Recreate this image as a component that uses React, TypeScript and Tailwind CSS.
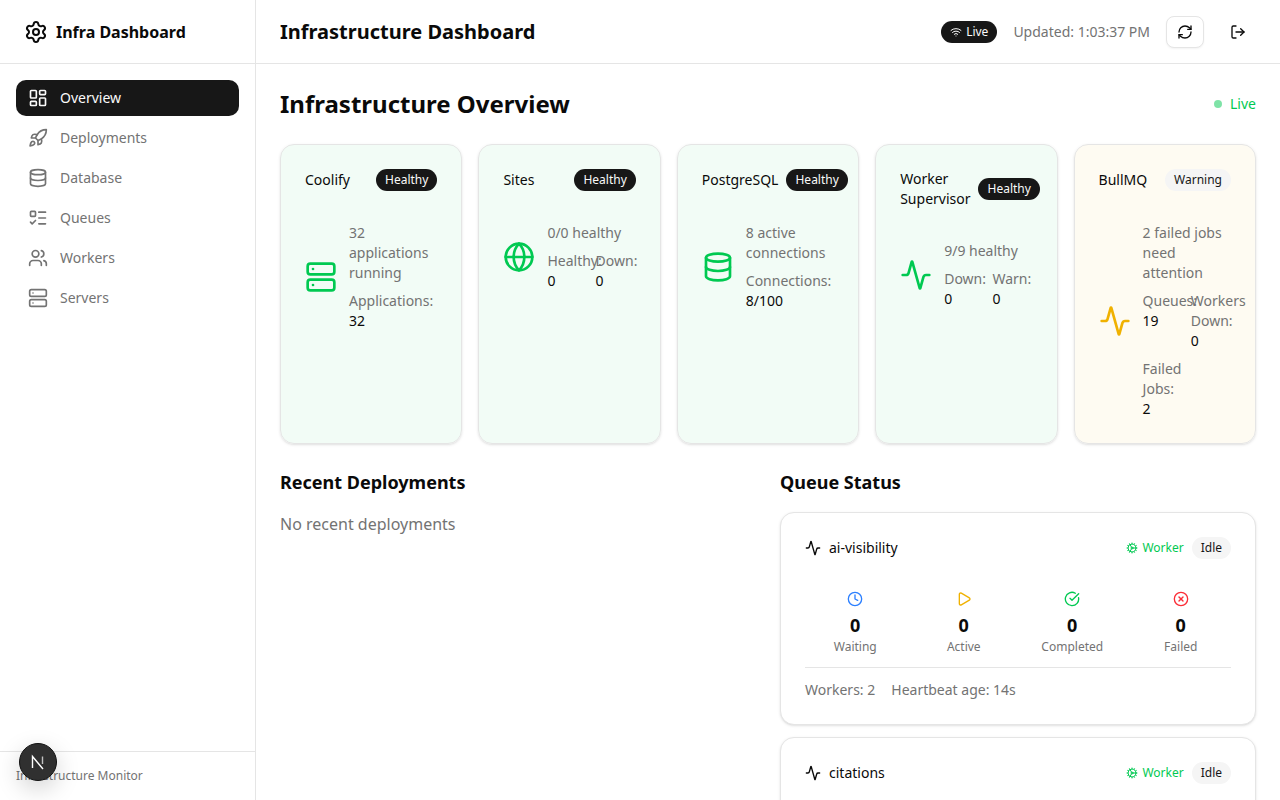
import {
  Activity,
  CircleCheckBig,
  CircleX,
  Clock,
  Cog,
  Database,
  Globe,
  LayoutDashboard,
  ListTodo,
  LogOut,
  Play,
  RefreshCw,
  Rocket,
  Server,
  Settings,
  Users,
  Wifi,
} from 'lucide-react'

const navItems = [
  { label: 'Overview', icon: LayoutDashboard, active: true },
  { label: 'Deployments', icon: Rocket },
  { label: 'Database', icon: Database },
  { label: 'Queues', icon: ListTodo },
  { label: 'Workers', icon: Users },
  { label: 'Servers', icon: Server },
]

const services = [
  {
    name: 'Coolify',
    status: 'Healthy',
    icon: Server,
    text: '32 applications running',
    stats: [{ label: 'Applications:', value: '32' }],
  },
  {
    name: 'Sites',
    status: 'Healthy',
    icon: Globe,
    text: '0/0 healthy',
    stats: [
      { label: 'Healthy:', value: '0' },
      { label: 'Down:', value: '0' },
    ],
  },
  {
    name: 'PostgreSQL',
    status: 'Healthy',
    icon: Database,
    text: '8 active connections',
    stats: [{ label: 'Connections:', value: '8/100' }],
  },
  {
    name: 'Worker Supervisor',
    status: 'Healthy',
    icon: Activity,
    text: '9/9 healthy',
    stats: [
      { label: 'Down:', value: '0' },
      { label: 'Warn:', value: '0' },
    ],
  },
  {
    name: 'BullMQ',
    status: 'Warning',
    icon: Activity,
    text: '2 failed jobs need attention',
    stats: [
      { label: 'Queues:', value: '19' },
      { label: 'Workers Down:', value: '0' },
      { label: 'Failed Jobs:', value: '2' },
    ],
  },
]

const queues = [
  { name: 'ai-visibility', workers: 2, age: '14s' },
  { name: 'citations', workers: 2, age: '14s' },
]

function ServiceCard({ service }: { service: (typeof services)[number] }) {
  const warning = service.status === 'Warning'
  const Icon = service.icon

  return (
    <div className={`rounded-[14px] border border-[#e5e5e5] p-6 shadow-sm ${warning ? 'bg-yellow-500/5' : 'bg-green-500/5'}`}>
      <div className="mb-8 flex items-center justify-between gap-2">
        <div className="text-sm leading-5 text-[#0a0a0a]">{service.name}</div>
        <span
          className={`inline-flex shrink-0 items-center rounded-full border border-transparent px-2 py-0.5 text-xs ${
            warning ? 'bg-[#f5f5f5] text-[#171717]' : 'bg-[#171717] text-[#fafafa]'
          }`}
        >
          {service.status}
        </span>
      </div>
      <div className="flex items-center gap-3">
        <Icon className={`h-8 w-8 shrink-0 ${warning ? 'text-yellow-500' : 'text-green-500'}`} />
        <div className="min-w-0 flex-1 text-sm leading-5">
          <p className="text-[#737373]">{service.text}</p>
          <div className="mt-2 grid grid-cols-2 gap-2">
            {service.stats.map(stat => (
              <div key={stat.label}>
                <div className="text-[#737373]">{stat.label}</div>
                <div className="text-[#0a0a0a]">{stat.value}</div>
              </div>
            ))}
          </div>
        </div>
      </div>
    </div>
  )
}

function QueueStat({ icon: Icon, color, label }: { icon: typeof Clock; color: string; label: string }) {
  return (
    <div className="flex flex-col items-center">
      <Icon className={`mb-1 h-4 w-4 ${color}`} />
      <div className="text-lg font-bold leading-7 text-[#0a0a0a]">0</div>
      <div className="text-xs text-[#737373]">{label}</div>
    </div>
  )
}

function QueueCard({ queue }: { queue: (typeof queues)[number] }) {
  return (
    <div className="rounded-[14px] border border-[#e5e5e5] bg-white p-6 shadow-sm">
      <div className="mb-8 flex items-center justify-between">
        <div className="flex items-center gap-2 text-sm text-[#0a0a0a]">
          <Activity className="h-4 w-4" />
          {queue.name}
        </div>
        <div className="flex items-center gap-2">
          <span className="flex items-center gap-1 text-xs text-green-500">
            <Cog className="h-3 w-3" />
            Worker
          </span>
          <span className="inline-flex items-center rounded-full border border-transparent bg-[#f5f5f5] px-2 py-0.5 text-xs text-[#171717]">
            Idle
          </span>
        </div>
      </div>
      <div className="grid grid-cols-4 gap-2">
        <QueueStat icon={Clock} color="text-blue-500" label="Waiting" />
        <QueueStat icon={Play} color="text-yellow-500" label="Active" />
        <QueueStat icon={CircleCheckBig} color="text-green-500" label="Completed" />
        <QueueStat icon={CircleX} color="text-red-500" label="Failed" />
      </div>
      <div className="mt-3 flex gap-4 border-t border-[#e5e5e5] pt-3 text-sm leading-5 text-[#737373]">
        <span>Workers: {queue.workers}</span>
        <span>Heartbeat age: {queue.age}</span>
      </div>
    </div>
  )
}

export default function App() {
  return (
    <div className="flex h-screen overflow-hidden bg-white font-['Noto_Sans',sans-serif] text-[#0a0a0a]">
      {/* sidebar */}
      <aside className="flex w-64 shrink-0 flex-col border-r border-[#e5e5e5]">
        <div className="flex h-16 items-center gap-2 border-b border-[#e5e5e5] px-6">
          <Settings className="h-6 w-6" />
          <span className="font-bold">Infra Dashboard</span>
        </div>
        <nav className="flex flex-1 flex-col gap-1 p-4">
          {navItems.map(item => (
            <a
              key={item.label}
              className={`flex h-9 items-center gap-3 rounded-[10px] px-3 text-sm ${
                item.active ? 'bg-[#171717] text-[#fafafa]' : 'text-[#737373]'
              }`}
            >
              <item.icon className="h-5 w-5" />
              {item.label}
            </a>
          ))}
        </nav>
        <div className="border-t border-[#e5e5e5] p-4 text-xs text-[#737373]">Infrastructure Monitor</div>
      </aside>

      <div className="flex min-w-0 flex-1 flex-col">
        <header className="flex h-16 shrink-0 items-center justify-between border-b border-[#e5e5e5] px-6">
          <h1 className="text-xl font-bold">Infrastructure Dashboard</h1>
          <div className="flex items-center gap-4">
            <span className="inline-flex items-center gap-1 rounded-full border border-transparent bg-[#171717] px-2 py-0.5 text-xs text-[#fafafa]">
              <Wifi className="h-3 w-3" />
              Live
            </span>
            <span className="text-sm text-[#737373]">Updated: 1:03:37 PM</span>
            <button className="flex h-8 items-center justify-center rounded-lg border border-[#e5e5e5] bg-white px-2.5 shadow-xs">
              <RefreshCw className="h-4 w-4" />
            </button>
            <button className="flex h-9 w-9 items-center justify-center rounded-lg">
              <LogOut className="h-4 w-4" />
            </button>
          </div>
        </header>

        <main className="min-h-0 flex-1 overflow-hidden p-6">
          <div className="mb-6 flex items-center justify-between">
            <h2 className="text-2xl font-bold">Infrastructure Overview</h2>
            <div className="flex items-center gap-2 text-sm text-green-500">
              <span className="h-2 w-2 rounded-full bg-green-500 opacity-50" />
              Live
            </div>
          </div>

          <div className="mb-6 grid grid-cols-5 gap-4">
            {services.map(service => (
              <ServiceCard key={service.name} service={service} />
            ))}
          </div>

          <div className="grid grid-cols-2 gap-6">
            <section>
              <h3 className="mb-4 text-lg font-bold">Recent Deployments</h3>
              <p className="text-[#737373]">No recent deployments</p>
            </section>
            <section>
              <h3 className="mb-4 text-lg font-bold">Queue Status</h3>
              <div className="flex flex-col gap-3">
                {queues.map(queue => (
                  <QueueCard key={queue.name} queue={queue} />
                ))}
              </div>
            </section>
          </div>
        </main>
      </div>

      {/* next dev indicator */}
      <div className="fixed bottom-[19px] left-[19px] flex h-[38px] w-[38px] items-center justify-center rounded-full border border-[#111] bg-[#303030] shadow-[0_8px_24px_rgba(0,0,0,0.18)]">
        <svg width="18" height="18" viewBox="0 0 18 18" fill="none" stroke="#fff" strokeWidth="1.4">
          <path d="M3.5 15V3.5L14 16" />
          <path d="M13.5 3.5V11" strokeOpacity="0.7" />
        </svg>
      </div>
    </div>
  )
}
